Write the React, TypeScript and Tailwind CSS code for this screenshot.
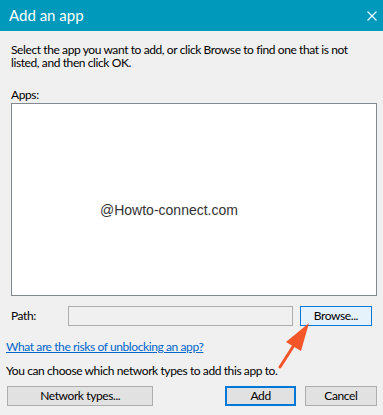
import React from "react";

const FONT = { fontFamily: 'Lato, "Noto Sans", "Liberation Sans", sans-serif' };

function WinButton({
  label,
  className = "",
  focused = false,
  hover = false,
}: {
  label: string;
  className?: string;
  focused?: boolean;
  hover?: boolean;
}) {
  const skin = focused
    ? "border-2 border-[#0078d7] bg-[#e1e1e1]"
    : hover
    ? "border border-[#0078d7] bg-[#e5f1fb]"
    : "border border-[#adadad] bg-[#e1e1e1]";
  return (
    <div
      className={`flex h-[20px] items-center justify-center text-[12px] text-black ${skin} ${className}`}
    >
      {label}
    </div>
  );
}

export default function App() {
  return (
    <div
      className="relative h-[415px] w-[383px] overflow-hidden bg-[#f0f0f0] text-[12px] tracking-[-0.4px] text-black"
      style={FONT}
    >
      {/* Title bar */}
      <div className="flex h-[31px] items-center justify-between bg-[#0099bc] pl-[9px] pr-[6px]">
        <span className="text-[15px] tracking-normal text-white">Add an app</span>
        <svg width="10" height="10" viewBox="0 0 10 10">
          <path d="M0.5 0.5 L9.5 9.5 M9.5 0.5 L0.5 9.5" stroke="white" strokeWidth="1.1" />
        </svg>
      </div>

      <div className="flex flex-col px-[11px]">
        <p className="mt-[12px] leading-[13px]">
          Select the app you want to add, or click Browse to find one that is not
          listed, and then click OK.
        </p>

        <div className="mt-[19px] leading-[13px]">Apps:</div>

        {/* App list */}
        <div className="mt-[2px] h-[193px] w-[366px] border border-[#828790] bg-white pl-[88px] pt-[96px]">
          <span
            className="text-[14px] tracking-normal text-[#333]"
            style={{ fontFamily: '"Liberation Sans", Arial, sans-serif' }}
          >
            @Howto-connect.com
          </span>
        </div>

        {/* Path row */}
        <div className="mt-[10px] flex items-center">
          <span className="w-[58px]">Path:</span>
          <div className="h-[20px] w-[227px] border border-[#adadad] bg-[#f0f0f0]" />
          <WinButton label="Browse..." hover className="ml-[7px] w-[73px]" />
        </div>
      </div>

      <div className="flex flex-col px-[6px]">
        <a className="mt-[14px] leading-[13px] text-[#0066cc] underline">
          What are the risks of unblocking an app?
        </a>
        <div className="mt-[11px] leading-[13px]">
          You can choose which network types to add this app to.
        </div>

        <div className="mt-[9px] flex items-center">
          <WinButton label="Network types..." className="ml-[1px] w-[148px]" />
          <WinButton label="Add" focused className="ml-[72px] w-[71px]" />
          <WinButton label="Cancel" className="ml-[9px] w-[73px]" />
        </div>
      </div>

      {/* Annotation arrow */}
      <svg
        className="pointer-events-none absolute left-0 top-0"
        width="383"
        height="415"
        viewBox="0 0 383 415"
      >
        <line x1="280" y1="367" x2="296" y2="342" stroke="#f4562a" strokeWidth="3" strokeLinecap="round" />
        <polygon points="309,323 286,342 301,351" fill="#f4562a" />
      </svg>
    </div>
  );
}
